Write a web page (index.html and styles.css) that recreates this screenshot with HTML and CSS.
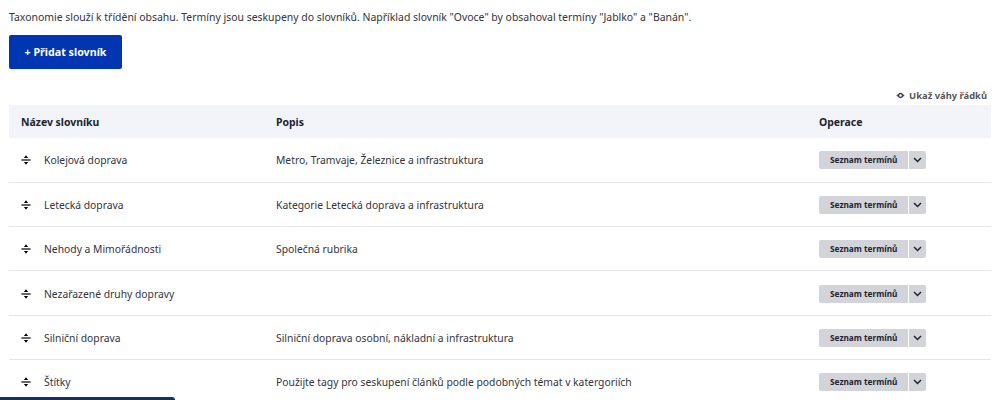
FILE: index.html
```html
<!DOCTYPE html>
<html lang="cs">
<head>
    <meta charset="UTF-8">
    <title>Taxonomie</title>
    <link rel="stylesheet" href="styles.css">
</head>
<body>
    <p class="intro">Taxonomie slouží k třídění obsahu. Termíny jsou seskupeny do slovníků. Například slovník "Ovoce" by obsahoval termíny "Jablko" a "Banán".</p>

    <a class="add-button" href="#">+ Přidat slovník</a>

    <div class="weights-toggle">
        <svg class="eye" width="9" height="7" viewBox="0 0 9 7"><path d="M0.4 3.5Q1.4 2.6 2 2.2A3 3 0 0 1 7 2.2Q7.6 2.6 8.6 3.5Q7.6 4.4 7 4.8A3 3 0 0 1 2 4.8Q1.4 4.4 0.4 3.5z" fill="#44454c"/><circle cx="4.5" cy="3.5" r="1.2" fill="white"/></svg>
        <span>Ukaž váhy řádků</span>
    </div>

    <table class="vocab-table">
        <thead>
            <tr>
                <th class="col-name">Název slovníku</th>
                <th class="col-desc">Popis</th>
                <th>Operace</th>
            </tr>
        </thead>
        <tbody>
            <tr>
                <td><div class="name-cell"><svg class="drag" width="12" height="12" viewBox="0 0 12 12"><use href="#drag-icon"/></svg>Kolejová doprava</div></td>
                <td>Metro, Tramvaje, Železnice a infrastruktura</td>
                <td><div class="ops"><a class="ops-main" href="#">Seznam termínů</a><a class="ops-toggle" href="#"><svg width="9" height="6" viewBox="0 0 9 6"><use href="#chevron-icon"/></svg></a></div></td>
            </tr>
            <tr>
                <td><div class="name-cell"><svg class="drag" width="12" height="12" viewBox="0 0 12 12"><use href="#drag-icon"/></svg>Letecká doprava</div></td>
                <td>Kategorie Letecká doprava a infrastruktura</td>
                <td><div class="ops"><a class="ops-main" href="#">Seznam termínů</a><a class="ops-toggle" href="#"><svg width="9" height="6" viewBox="0 0 9 6"><use href="#chevron-icon"/></svg></a></div></td>
            </tr>
            <tr>
                <td><div class="name-cell"><svg class="drag" width="12" height="12" viewBox="0 0 12 12"><use href="#drag-icon"/></svg>Nehody a Mimořádnosti</div></td>
                <td>Společná rubrika</td>
                <td><div class="ops"><a class="ops-main" href="#">Seznam termínů</a><a class="ops-toggle" href="#"><svg width="9" height="6" viewBox="0 0 9 6"><use href="#chevron-icon"/></svg></a></div></td>
            </tr>
            <tr>
                <td><div class="name-cell"><svg class="drag" width="12" height="12" viewBox="0 0 12 12"><use href="#drag-icon"/></svg>Nezařazené druhy dopravy</div></td>
                <td></td>
                <td><div class="ops"><a class="ops-main" href="#">Seznam termínů</a><a class="ops-toggle" href="#"><svg width="9" height="6" viewBox="0 0 9 6"><use href="#chevron-icon"/></svg></a></div></td>
            </tr>
            <tr>
                <td><div class="name-cell"><svg class="drag" width="12" height="12" viewBox="0 0 12 12"><use href="#drag-icon"/></svg>Silniční doprava</div></td>
                <td>Silniční doprava osobní, nákladní a infrastruktura</td>
                <td><div class="ops"><a class="ops-main" href="#">Seznam termínů</a><a class="ops-toggle" href="#"><svg width="9" height="6" viewBox="0 0 9 6"><use href="#chevron-icon"/></svg></a></div></td>
            </tr>
            <tr>
                <td><div class="name-cell"><svg class="drag" width="12" height="12" viewBox="0 0 12 12"><use href="#drag-icon"/></svg>Štítky</div></td>
                <td>Použijte tagy pro seskupení článků podle podobných témat v katergoriích</td>
                <td><div class="ops"><a class="ops-main" href="#">Seznam termínů</a><a class="ops-toggle" href="#"><svg width="9" height="6" viewBox="0 0 9 6"><use href="#chevron-icon"/></svg></a></div></td>
            </tr>
        </tbody>
    </table>

    <div class="bottom-bar"></div>

    <svg class="icon-defs" width="0" height="0">
        <symbol id="drag-icon" viewBox="0 0 12 12">
            <path d="M1.4 5.4h9.2v1.2H1.4z" fill="#000"/>
            <path d="M6 1.2L8.1 3.9H3.9zM6 10.8L3.9 8.1H8.1z" fill="#000"/>
        </symbol>
        <symbol id="chevron-icon" viewBox="0 0 9 6">
            <path d="M1 1l3.5 3.5L8 1" fill="none" stroke="#222330" stroke-width="1.5"/>
        </symbol>
    </svg>
</body>
</html>
```

FILE: styles.css
```css
html, body {
    height: 400px;
    overflow: hidden;
}
body {
    margin: 0;
    padding: 0 9px;
    background: white;
    font-family: "Noto Sans", sans-serif;
    font-size: 10.44px;
    color: #33343c;
}
.intro {
    margin: 0;
    padding-top: 10px;
    line-height: 15px;
}
.add-button {
    display: inline-block;
    margin-top: 10px;
    padding: 0 14.5px;
    height: 34px;
    line-height: 34px;
    background: #0036b1;
    border-radius: 2px;
    color: white;
    font-size: 10.7px;
    font-weight: 700;
    text-decoration: none;
    width: 84px;
    text-align: center;
}
.weights-toggle {
    display: flex;
    justify-content: flex-end;
    align-items: center;
    gap: 4px;
    height: 15px;
    margin-top: 19px;
    padding-right: 4px;
    font-size: 9.4px;
    font-weight: 700;
    color: #55565b;
}
.vocab-table {
    width: 100%;
    margin-top: 2px;
    border-collapse: collapse;
    table-layout: fixed;
}
th {
    height: 33px;
    padding: 0 0 0 12px;
    background: #f3f4f9;
    text-align: left;
    font-weight: 700;
    color: #222330;
}
.col-name {
    width: 243px;
}
.col-desc {
    width: 531px;
}
td {
    box-sizing: border-box;
    height: 44.33px;
    padding: 1px 0 0 12px;
    border-bottom: 1px solid #e6e6ea;
    font-size: 10.33px;
}
.name-cell {
    display: flex;
    align-items: center;
    gap: 12px;
    margin-left: -1px;
}
.ops {
    display: flex;
    height: 18px;
}
.ops-main {
    padding: 0 11px;
    line-height: 18px;
    background: #d3d4d9;
    border-radius: 2px 0 0 2px;
    font-size: 8.25px;
    font-weight: 700;
    color: #222330;
    text-decoration: none;
}
.ops-toggle {
    display: flex;
    align-items: center;
    justify-content: center;
    width: 17px;
    margin-left: 1px;
    background: #d3d4d9;
    border-radius: 0 2px 2px 0;
}
.bottom-bar {
    position: absolute;
    left: 0;
    top: 397px;
    width: 175px;
    height: 3px;
    background: #14306b;
    border-top-right-radius: 3px;
}
.icon-defs {
    position: absolute;
}
```
